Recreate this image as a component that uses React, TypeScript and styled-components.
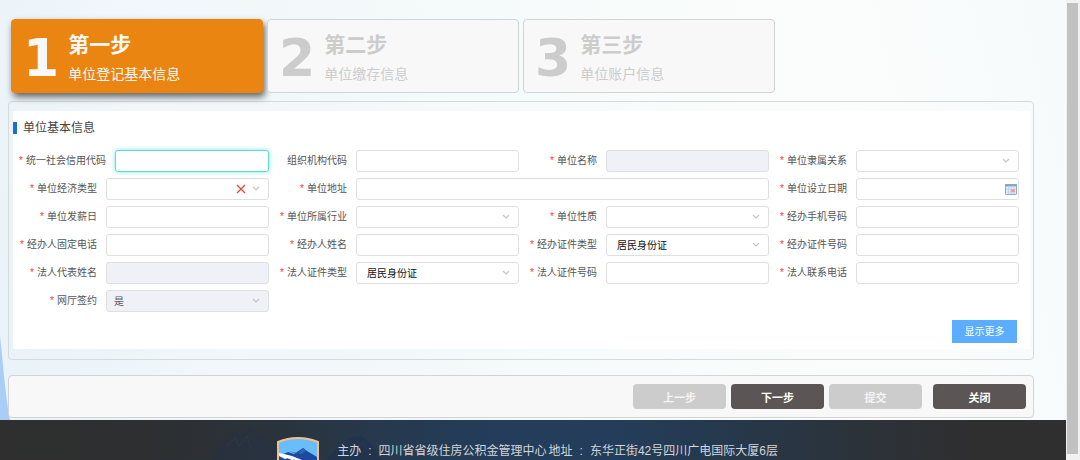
import React from "react";
import styled, { createGlobalStyle, css } from "styled-components";

const GlobalStyle = createGlobalStyle`
  *, *::before, *::after { box-sizing: border-box; }
  body {
    margin: 0;
    font-family: "Liberation Sans", "Noto Sans CJK SC", sans-serif;
    font-size: 10px;
    color: #555;
  }
  button, input, select { font: inherit; }
`;

const Shell = styled.div`
  display: flex;
  height: 100vh;
  overflow: hidden;
`;

const Page = styled.div`
  position: relative;
  flex: 1;
  min-width: 0;
  height: max-content;
  background: linear-gradient(77deg, #e8f2f8 0%, #f0f6fa 18%, #f3f9fa 38%, #f8fcfb 65%, #fbfdfc 80%, #f6fafb 100%);
`;

const Slope = styled.svg`
  position: absolute;
  left: 0;
  top: 320px;
  width: 10px;
  height: 100px;
`;

const Main = styled.main`
  position: relative;
  padding: 19px 32px 2px 8px;
`;

const Steps = styled.ol`
  display: grid;
  grid-template-columns: repeat(3, minmax(0, 252px));
  gap: 4px;
  margin: 0 0 8px;
  padding: 0 3px;
  list-style: none;
`;

const Step = styled.li<{ $active?: boolean }>`
  display: flex;
  align-items: center;
  gap: 9px;
  height: 74px;
  padding: 4px 11px 0;
  border: 1px solid #d2d4d4;
  border-radius: 4px;
  background: #f8f8f8;
  color: #ccc;
  ${(p) =>
    p.$active &&
    css`
      border-color: #ea8511;
      background: #ea8511;
      color: #f8f8f8;
      box-shadow: 2px 4px 7px rgba(0, 0, 0, 0.6);
    `}
`;

const StepNumber = styled.span`
  font: bold 52px/60px "DejaVu Sans", sans-serif;
`;

const StepText = styled.div`
  display: flex;
  flex-direction: column;
  gap: 2px;
  white-space: nowrap;
`;

const StepTitle = styled.strong`
  font-size: 21px;
  line-height: 30px;
`;

const StepNote = styled.span`
  font-size: 14px;
  line-height: 24px;
`;

const Panel = styled.section`
  padding: 9px 3px 10px 4px;
  border: 1px solid #d5dadc;
  border-radius: 4px;
`;

const Form = styled.form`
  padding: 8px 0 6px;
  background: #fff;
`;

const Heading = styled.h2`
  display: flex;
  align-items: center;
  gap: 6px;
  margin: 0 0 13px;
  font-size: 12px;
  font-weight: 400;
  line-height: 18px;
  color: #444;
  &::before {
    content: "";
    width: 4px;
    height: 12px;
    background: #1b6fd0;
  }
`;

const Fields = styled.div`
  display: grid;
  grid-template-columns: repeat(4, minmax(0, 1fr));
  row-gap: 6px;
  padding: 0 11px 0 6px;
`;

const Field = styled.div<{ $wide?: boolean }>`
  display: flex;
  align-items: center;
  justify-content: flex-end;
  gap: 9px;
  grid-column: span ${(p) => (p.$wide ? 2 : 1)};
`;

const Label = styled.label`
  flex: none;
  min-width: 78px;
  text-align: right;
  white-space: nowrap;
  line-height: 22px;
`;

const Star = styled.span`
  margin-right: 3px;
  color: #f33;
`;

const Control = styled.div`
  position: relative;
  flex: 1;
  min-width: 0;
  display: flex;
`;

const boxStyle = css<{ $active?: boolean }>`
  width: 100%;
  height: 22px;
  margin: 0;
  border: 1px solid #dfdfdf;
  border-radius: 3px;
  background: #fff;
  color: #111;
  outline: none;
  appearance: none;
  opacity: 1;
  &:disabled {
    background: #f0f1f7;
    color: #555;
  }
  ${(p) =>
    p.$active &&
    css`
      border-color: #62dccb;
      box-shadow: 0 0 4px #6fe8e0;
    `}
`;

const TextBox = styled.input<{ $active?: boolean }>`
  ${boxStyle}
  padding: 0 7px;
`;

const SelectBox = styled.select`
  ${boxStyle}
  padding: 0 24px 0 10px;
  &:disabled { padding-left: 7px; }
`;

const Adornments = styled.div<{ $inset: number }>`
  position: absolute;
  top: 0;
  bottom: 0;
  right: ${(p) => p.$inset}px;
  display: flex;
  align-items: center;
  gap: 6px;
  pointer-events: none;
`;

const IconButton = styled.button`
  display: flex;
  padding: 0;
  border: 0;
  background: none;
  pointer-events: auto;
`;

const FormFoot = styled.div`
  display: flex;
  justify-content: flex-end;
  padding: 8px 13px 0 0;
`;

const MoreButton = styled.button`
  width: 65px;
  height: 23px;
  padding: 0 0 2px;
  border: 0;
  background: #5aadff;
  color: #fff;
`;

const ActionBar = styled.div`
  display: flex;
  justify-content: flex-end;
  gap: 5px;
  margin-top: 15px;
  padding: 8px 7px;
  border: 1px solid #d2d4d6;
  border-radius: 4px;
  background: #f8f8f8;
`;

const ActionButton = styled.button<{ $apart?: boolean }>`
  width: 93px;
  height: 25px;
  margin-left: ${(p) => (p.$apart ? 6 : 0)}px;
  padding: 0;
  border: 0;
  border-radius: 4px;
  background: #5b5655;
  color: #fff;
  font-size: 11px;
  font-weight: 700;
  &:disabled {
    background: #ccc;
    color: #f4f4f4;
  }
`;

const Footer = styled.footer`
  position: relative;
  display: flex;
  align-items: flex-start;
  gap: 18px;
  height: 90px;
  padding: 17px 26% 0;
  overflow: hidden;
  background: linear-gradient(90deg, #2f2f2f 0%, #2e2f30 12%, #2a333c 26%, #26394e 36%, #233d5a 46%, #233d5a 58%, #26384b 69%, #2b333b 79%, #2f2f30 91%, #2f2f2f 100%);
`;

const Ridge = styled.svg`
  position: absolute;
  left: 20%;
  top: 0;
  width: 240px;
  height: 60px;
`;

const Emblem = styled.svg`
  position: relative;
  flex: none;
  width: 42px;
  height: 50px;
`;

const Host = styled.p`
  position: relative;
  display: flex;
  gap: 2px;
  margin: 5px 0 0;
  font-size: 12px;
  line-height: 18px;
  white-space: nowrap;
  color: #d3d6da;
`;

const HostGroup = styled.span`
  display: flex;
  gap: 7px;
`;

const Scroller = styled.div`
  flex: none;
  width: 14px;
  padding: 3px 2px 6px 1px;
  background: #f1f1f1;
`;

const Thumb = styled.div`
  height: 100%;
  background: #c1c1c1;
`;

type Kind = "text" | "select" | "date";

interface FieldSpec {
  id: string;
  label: string;
  kind?: Kind;
  value?: string;
  optional?: boolean;
  disabled?: boolean;
  active?: boolean;
  wide?: boolean;
  clearable?: boolean;
}

const fields: FieldSpec[] = [
  { id: "creditCode", label: "统一社会信用代码", active: true },
  { id: "orgCode", label: "组织机构代码", optional: true },
  { id: "unitName", label: "单位名称", disabled: true },
  { id: "relation", label: "单位隶属关系", kind: "select" },
  { id: "economy", label: "单位经济类型", kind: "select", clearable: true },
  { id: "address", label: "单位地址", wide: true },
  { id: "founded", label: "单位设立日期", kind: "date" },
  { id: "payday", label: "单位发薪日" },
  { id: "industry", label: "单位所属行业", kind: "select" },
  { id: "nature", label: "单位性质", kind: "select" },
  { id: "agentMobile", label: "经办手机号码" },
  { id: "agentPhone", label: "经办人固定电话" },
  { id: "agentName", label: "经办人姓名" },
  { id: "agentIdType", label: "经办证件类型", kind: "select", value: "居民身份证" },
  { id: "agentIdNo", label: "经办证件号码" },
  { id: "legalName", label: "法人代表姓名", disabled: true },
  { id: "legalIdType", label: "法人证件类型", kind: "select", value: "居民身份证" },
  { id: "legalIdNo", label: "法人证件号码" },
  { id: "legalPhone", label: "法人联系电话" },
  { id: "signed", label: "网厅签约", kind: "select", value: "是", disabled: true },
];

const steps = [
  { title: "第一步", note: "单位登记基本信息" },
  { title: "第二步", note: "单位缴存信息" },
  { title: "第三步", note: "单位账户信息" },
];

const Chevron = () => (
  <svg width="8" height="6" viewBox="0 0 8 6" fill="none" stroke="#c4c4c4" strokeWidth="1.2" aria-hidden="true">
    <path d="M1 1l3 3 3-3" />
  </svg>
);

const Cross = () => (
  <svg width="10" height="10" viewBox="0 0 10 10" fill="none" stroke="#e2473d" strokeWidth="1.3" aria-hidden="true">
    <path d="M1 1l8 8M9 1l-8 8" />
  </svg>
);

const CalendarIcon = () => (
  <svg width="12" height="11" viewBox="0 0 12 11" aria-hidden="true">
    <rect x=".5" y=".5" width="11" height="10" rx=".5" fill="#e6eefb" stroke="#93a7c8" />
    <path d="M0 0h12v2.5H0z" fill="#8aa6cf" />
    <path d="M1 5.3h10M1 8h10M3.7 3v7M6.2 3v7M8.8 3v7" stroke="#b5c8e8" strokeWidth=".7" />
    <path d="M6.4 5.3h3.3v2.8H6.4z" fill="#ee9a80" />
  </svg>
);

function FormField({ spec }: { spec: FieldSpec }) {
  const { id, label, kind = "text", value = "", optional, disabled, active, wide, clearable } = spec;
  return (
    <Field $wide={wide}>
      <Label htmlFor={id}>
        {!optional && <Star>*</Star>}
        {label}
      </Label>
      <Control>
        {kind === "select" ? (
          <SelectBox id={id} defaultValue={value} disabled={disabled}>
            <option value={value}>{value}</option>
          </SelectBox>
        ) : (
          <TextBox id={id} type="text" defaultValue={value} disabled={disabled} $active={active} />
        )}
        {kind === "select" && (
          <Adornments $inset={9}>
            {clearable && (
              <IconButton type="button" aria-label="清除">
                <Cross />
              </IconButton>
            )}
            <Chevron />
          </Adornments>
        )}
        {kind === "date" && (
          <Adornments $inset={2}>
            <IconButton type="button" aria-label="选择日期">
              <CalendarIcon />
            </IconButton>
          </Adornments>
        )}
      </Control>
    </Field>
  );
}

export default function App() {
  return (
    <>
      <GlobalStyle />
      <Shell>
        <Page>
          <Slope viewBox="0 0 10 100" preserveAspectRatio="none" aria-hidden="true">
            <path d="M0 16C3 42 5 74 10 100H0z" fill="#a9cdf5" />
          </Slope>
          <Main>
            <Steps>
              {steps.map((step, i) => (
                <Step key={step.title} $active={i === 0}>
                  <StepNumber>{i + 1}</StepNumber>
                  <StepText>
                    <StepTitle>{step.title}</StepTitle>
                    <StepNote>{step.note}</StepNote>
                  </StepText>
                </Step>
              ))}
            </Steps>
            <Panel>
              <Form>
                <Heading>单位基本信息</Heading>
                <Fields>
                  {fields.map((spec) => (
                    <FormField key={spec.id} spec={spec} />
                  ))}
                </Fields>
                <FormFoot>
                  <MoreButton type="button">显示更多</MoreButton>
                </FormFoot>
              </Form>
            </Panel>
            <ActionBar>
              <ActionButton type="button" disabled>上一步</ActionButton>
              <ActionButton type="button">下一步</ActionButton>
              <ActionButton type="button" disabled>提交</ActionButton>
              <ActionButton type="button" $apart>关闭</ActionButton>
            </ActionBar>
          </Main>
          <Footer>
            <Ridge viewBox="0 0 240 60" aria-hidden="true">
              <path d="M0 34l14-16 8-6 7 2 8-8 12 12 10 6 12 14v22H0z" fill="#24324a" opacity=".35" />
              <path d="M112 42l12-14 12-10 12-2 10 8 14 20 30 16h-90z" fill="#1e3050" opacity=".6" />
              <path d="M14 26l8-8 4 8 8-10 4 12M126 30l10-8 6 8 8-8 6 12" stroke="#3c4c63" fill="none" opacity=".25" />
            </Ridge>
            <Emblem viewBox="0 0 42 50" aria-hidden="true">
              <path d="M1 5Q21-3 41 5V30Q41 44 21 49Q1 44 1 30z" fill="#69bdfb" stroke="#f0c08a" strokeWidth="2" />
              <path d="M2 19l9-4 6 2 9-6 4 3 10 6v12H2z" fill="#1c4aa0" />
              <path d="M12 14l8 3 6-6 3 3-5 3z" fill="#2a63b8" />
              <path d="M2 16l5 1 8 2 10 4-2 1-12-3-3 1-6-3z" fill="#fff" />
              <path d="M9 20l10 4" stroke="#fff" strokeWidth="1.2" />
            </Emblem>
            <Host>
              <HostGroup>
                <span>主办</span>
                <span>:</span>
                <span>四川省省级住房公积金管理中心</span>
              </HostGroup>
              <HostGroup>
                <span>地址</span>
                <span>:</span>
                <span>东华正街42号四川广电国际大厦6层</span>
              </HostGroup>
            </Host>
          </Footer>
        </Page>
        <Scroller aria-hidden="true">
          <Thumb />
        </Scroller>
      </Shell>
    </>
  );
}
